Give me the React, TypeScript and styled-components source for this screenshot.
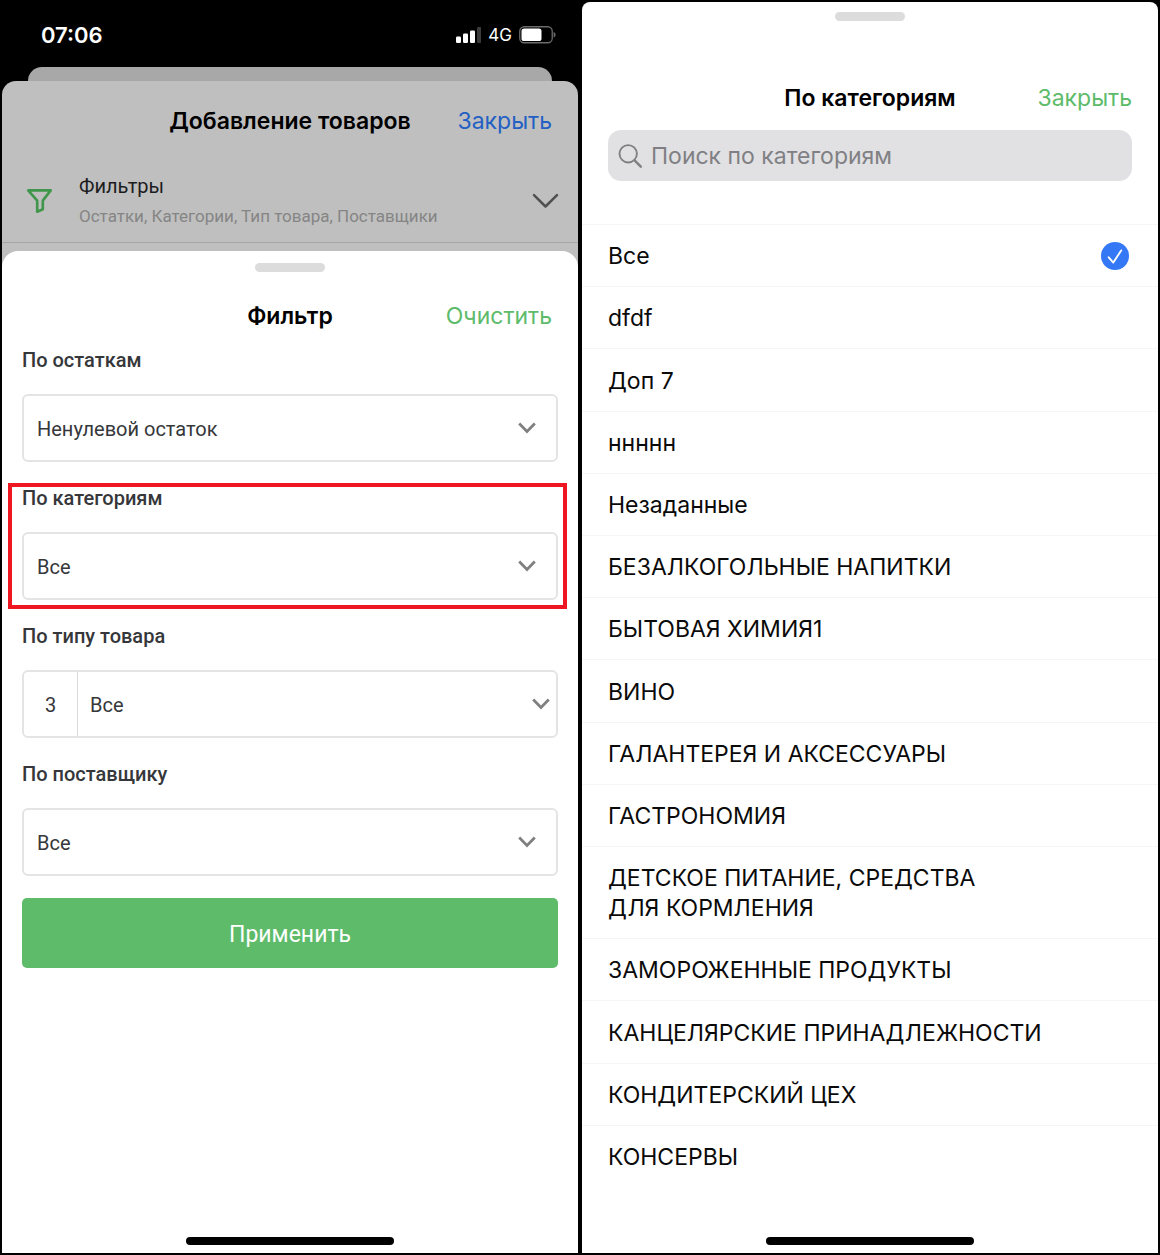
import React, { useState } from "react";
import styled, { createGlobalStyle } from "styled-components";

const ui = `Inter, Roboto, "Liberation Sans", sans-serif`;
const form = `Roboto, "Liberation Sans", sans-serif`;

const GlobalStyle = createGlobalStyle`
  *, *::before, *::after { box-sizing: border-box; }
  body { margin: 0; background: #000; font-family: ${ui}; color: #000; }
  button, input, select { font: inherit; color: inherit; margin: 0; }
  button { border: 0; padding: 0; background: none; cursor: pointer; }
`;

const Page = styled.div`
  display: grid;
  grid-template-columns: 1fr 1fr;
  gap: 4px;
  min-height: 100vh;
  padding: 2px;
`;

const Phone = styled.section`
  display: flex;
  flex-direction: column;
  min-width: 0;
`;

const StatusBar = styled.div`
  display: flex;
  align-items: center;
  justify-content: space-between;
  height: 65px;
  padding: 0 22px 0 39px;
  color: #fff;
`;

const Clock = styled.time`
  font-size: 22px;
  font-weight: 600;
`;

const Indicators = styled.div`
  display: flex;
  align-items: center;
  gap: 7px;
  font-size: 17px;
  font-weight: 400;
`;

const BackSheet = styled.div`
  height: 14px;
  margin: 0 26px;
  background: #a8a8a8;
  border-radius: 14px 14px 0 0;
`;

const DimmedSheet = styled.div`
  display: flex;
  flex-direction: column;
  flex: 1;
  background: #bfbfbf;
  border-radius: 14px 14px 0 0;
`;

const Sheet = styled.div<{ $radius: number }>`
  display: flex;
  flex-direction: column;
  flex: 1;
  background: #fff;
  border-radius: ${(p) => p.$radius}px ${(p) => p.$radius}px 0 0;
`;

const Handle = styled.div<{ $top: number; $bottom: number }>`
  flex: none;
  width: 70px;
  height: 9px;
  margin: ${(p) => p.$top}px auto ${(p) => p.$bottom}px;
  border-radius: 5px;
  background: #dcdcdc;
`;

const TitleBar = styled.header<{ $height: number }>`
  display: grid;
  grid-template-columns: 1fr auto 1fr;
  align-items: center;
  flex: none;
  height: ${(p) => p.$height}px;
  padding: 0 26px;
`;

const Title = styled.h2`
  grid-column: 2;
  margin: 0;
  font-size: 23px;
  font-weight: 600;
  line-height: 30px;
`;

const Action = styled.button<{ $color: string }>`
  justify-self: end;
  font-size: 23px;
  line-height: 30px;
  color: ${(p) => p.$color};
`;

const FilterSummary = styled.button`
  display: flex;
  align-items: center;
  width: 100%;
  height: 83px;
  margin-bottom: 8px;
  padding: 0 19px 0 22px;
  border-bottom: 1px solid #a6a6a6;
  font-family: ${form};
  text-align: left;
`;

const SummaryText = styled.span`
  display: flex;
  flex-direction: column;
  flex: 1;
  margin-left: 25px;
`;

const SummaryTitle = styled.span`
  font-size: 20px;
  line-height: 30px;
  color: #1c1c1e;
`;

const SummaryHint = styled.span`
  font-size: 17px;
  line-height: 30px;
  color: #858585;
`;

const Form = styled.form`
  display: flex;
  flex-direction: column;
  gap: 24px;
  padding: 0 20px;
`;

const Field = styled.div<{ $marked?: boolean }>`
  position: relative;
  display: flex;
  flex-direction: column;
  gap: 22px;
  font-family: ${form};
  font-size: 20px;
  color: #36373a;

  &::after {
    content: "";
    display: ${(p) => (p.$marked ? "block" : "none")};
    position: absolute;
    inset: -3px -9px -9px -14px;
    border: 4px solid #ee1620;
    pointer-events: none;
  }
`;

const Label = styled.label`
  font-weight: 500;
  line-height: 24px;
`;

const Control = styled.div`
  display: flex;
  align-items: stretch;
  position: relative;
  height: 68px;
  border: 2px solid #e4e4e4;
  border-radius: 6px;
`;

const Count = styled.span`
  display: grid;
  place-items: center;
  width: 54px;
  padding-top: 2px;
  border-right: 1px solid #dadada;
`;

const Select = styled.select<{ $inset: number }>`
  appearance: none;
  flex: 1;
  min-width: 0;
  padding: 2px 40px 0 ${(p) => p.$inset}px;
  border: 0;
  border-radius: 6px;
  background: transparent;
`;

const Arrow = styled.svg<{ $right: number }>`
  position: absolute;
  top: 24px;
  right: ${(p) => p.$right}px;
  pointer-events: none;
`;

const Apply = styled.button`
  height: 70px;
  margin-top: -2px;
  padding-top: 2px;
  border-radius: 5px;
  background: #5dbb6a;
  color: #fff;
  font-family: ${form};
  font-size: 23px;
`;

const HomeBar = styled.div`
  flex: none;
  width: 208px;
  height: 8px;
  margin: auto auto 8px;
  border-radius: 4px;
  background: #000;
`;

const Search = styled.label`
  display: flex;
  align-items: center;
  gap: 8px;
  height: 51px;
  margin: 0 26px 43px;
  padding: 0 10px;
  border-radius: 13px;
  background: #e1e1e3;
  color: #808084;
`;

const SearchInput = styled.input`
  flex: 1;
  min-width: 0;
  padding: 0;
  border: 0;
  outline: 0;
  background: transparent;
  font-size: 23px;
  &::placeholder { color: #808084; opacity: 1; }
`;

const Categories = styled.ul`
  display: flex;
  flex-direction: column;
  flex: 1;
  margin: 0;
  padding: 0;
  list-style: none;
`;

const Category = styled.li`
  display: flex;
  flex: 1 0 auto;
  border-top: 1px solid #f5f5f5;
`;

const CategoryLabel = styled.label`
  display: flex;
  align-items: center;
  justify-content: space-between;
  flex: 1;
  padding: 15px 29px 14px 26px;
  font-size: 23px;
  line-height: 30px;
  color: #0a0a0a;
  cursor: pointer;
`;

const Mark = styled.span`
  display: grid;
  flex: none;
  width: 28px;
  height: 28px;
  & > * { grid-area: 1 / 1; }
  svg { pointer-events: none; }
`;

const Radio = styled.input`
  appearance: none;
  width: 28px;
  height: 28px;
  border-radius: 50%;
  &:checked { background: #3478f6; }
  & + svg { visibility: hidden; }
  &:checked + svg { visibility: visible; }
`;

const Footer = styled.footer`
  display: flex;
  flex: none;
  height: 66px;
`;

const categories = [
  "Все",
  "dfdf",
  "Доп 7",
  "ннннн",
  "Незаданные",
  "БЕЗАЛКОГОЛЬНЫЕ НАПИТКИ",
  "БЫТОВАЯ ХИМИЯ1",
  "ВИНО",
  "ГАЛАНТЕРЕЯ И АКСЕССУАРЫ",
  "ГАСТРОНОМИЯ",
  "ДЕТСКОЕ ПИТАНИЕ, СРЕДСТВА ДЛЯ\u00a0КОРМЛЕНИЯ",
  "ЗАМОРОЖЕННЫЕ ПРОДУКТЫ",
  "КАНЦЕЛЯРСКИЕ ПРИНАДЛЕЖНОСТИ",
  "КОНДИТЕРСКИЙ ЦЕХ",
  "КОНСЕРВЫ",
];

const filters = [
  { id: "stock", label: "По остаткам", value: "Ненулевой остаток" },
  { id: "category", label: "По категориям", value: "Все", marked: true },
  { id: "type", label: "По типу товара", value: "Все", count: 3 },
  { id: "supplier", label: "По поставщику", value: "Все" },
];

const SignalIcon = () => (
  <svg width="26" height="16" viewBox="0 0 26 16" fill="#fff" aria-hidden="true">
    <rect x="1" y="9.5" width="5" height="6.5" rx="1.3" />
    <rect x="8" y="6.5" width="5" height="9.5" rx="1.3" />
    <rect x="15" y="3.5" width="5" height="12.5" rx="1.3" />
    <rect x="22" y="0" width="4.6" height="16" rx="1.3" fill="#3b3b3b" />
  </svg>
);

const BatteryIcon = () => (
  <svg width="37" height="18" viewBox="0 0 37 18" aria-hidden="true">
    <rect x="0.75" y="0.75" width="32.5" height="16" rx="4.5" fill="none" stroke="#6b6b6b" strokeWidth="1.3" />
    <rect x="2.5" y="2.5" width="20" height="12.5" rx="2.6" fill="#fff" />
    <path d="M34.6 6v5.6q2-.8 2-2.8t-2-2.8z" fill="#6b6b6b" />
  </svg>
);

const FunnelIcon = () => (
  <svg width="30" height="28" viewBox="0 0 30 28" fill="none" stroke="#3f964b" strokeWidth="2.6" strokeLinejoin="round" aria-hidden="true">
    <path d="M4.2 3.4h22.5L18.8 13.6v8.6l-5.6 2.5V13.6z" />
  </svg>
);

const WideChevron = () => (
  <svg width="28" height="16" viewBox="0 0 28 16" fill="none" stroke="#505050" strokeWidth="2.5" strokeLinecap="round" strokeLinejoin="round" aria-hidden="true">
    <path d="M3 2.2l11.5 11.3L26 2.2" />
  </svg>
);

const SearchIcon = () => (
  <svg width="25" height="26" viewBox="0 0 25 26" fill="none" stroke="#808084" strokeLinecap="round" aria-hidden="true">
    <circle cx="10.2" cy="10.8" r="8.7" strokeWidth="1.9" />
    <path d="M16.6 17.4l6.2 6.2" strokeWidth="2.5" />
  </svg>
);

const CheckIcon = () => (
  <svg width="28" height="28" viewBox="0 0 28 28" fill="none" stroke="#fff" strokeWidth="1.9" strokeLinecap="round" strokeLinejoin="round" aria-hidden="true">
    <path d="M7.7 15.3l4.6 5.3 7.9-12.2" />
  </svg>
);

export default function App() {
  const [selected, setSelected] = useState("Все");

  return (
    <>
      <GlobalStyle />
      <Page>
        <Phone>
          <StatusBar>
            <Clock>07:06</Clock>
            <Indicators>
              <SignalIcon />
              4G
              <BatteryIcon />
            </Indicators>
          </StatusBar>
          <BackSheet />
          <DimmedSheet>
            <TitleBar $height={79}>
              <Title>Добавление товаров</Title>
              <Action type="button" $color="#2360c4">Закрыть</Action>
            </TitleBar>
            <FilterSummary type="button">
              <FunnelIcon />
              <SummaryText>
                <SummaryTitle>Фильтры</SummaryTitle>
                <SummaryHint>Остатки, Категории, Тип товара, Поставщики</SummaryHint>
              </SummaryText>
              <WideChevron />
            </FilterSummary>
            <Sheet $radius={16}>
              <Handle $top={12} $bottom={11} />
              <TitleBar $height={65}>
                <Title>Фильтр</Title>
                <Action type="button" $color="#5dbb6a">Очистить</Action>
              </TitleBar>
              <Form onSubmit={(e) => e.preventDefault()}>
                {filters.map((f) => (
                  <Field key={f.id} $marked={f.marked}>
                    <Label htmlFor={f.id}>{f.label}</Label>
                    <Control>
                      {f.count && <Count>{f.count}</Count>}
                      <Select id={f.id} $inset={f.count ? 12 : 13}>
                        <option>{f.value}</option>
                      </Select>
                      <Arrow $right={f.count ? 5 : 19} width="20" height="16" viewBox="0 0 20 16" fill="none" stroke="#808080" strokeWidth="2.8" aria-hidden="true">
                        <path d="M2.2 3.6L10 11.4l7.8-7.8" />
                      </Arrow>
                    </Control>
                  </Field>
                ))}
                <Apply type="submit">Применить</Apply>
              </Form>
              <HomeBar />
            </Sheet>
          </DimmedSheet>
        </Phone>

        <Phone>
          <Sheet $radius={8}>
            <Handle $top={10} $bottom={44} />
            <TitleBar $height={65}>
              <Title>По категориям</Title>
              <Action type="button" $color="#5dbb6a">Закрыть</Action>
            </TitleBar>
            <Search>
              <SearchIcon />
              <SearchInput type="search" aria-label="Поиск по категориям" placeholder="Поиск по категориям" />
            </Search>
            <Categories>
              {categories.map((name) => (
                <Category key={name}>
                  <CategoryLabel>
                    {name}
                    <Mark>
                      <Radio type="radio" name="category" checked={selected === name} onChange={() => setSelected(name)} />
                      <CheckIcon />
                    </Mark>
                  </CategoryLabel>
                </Category>
              ))}
            </Categories>
            <Footer>
              <HomeBar />
            </Footer>
          </Sheet>
        </Phone>
      </Page>
    </>
  );
}
